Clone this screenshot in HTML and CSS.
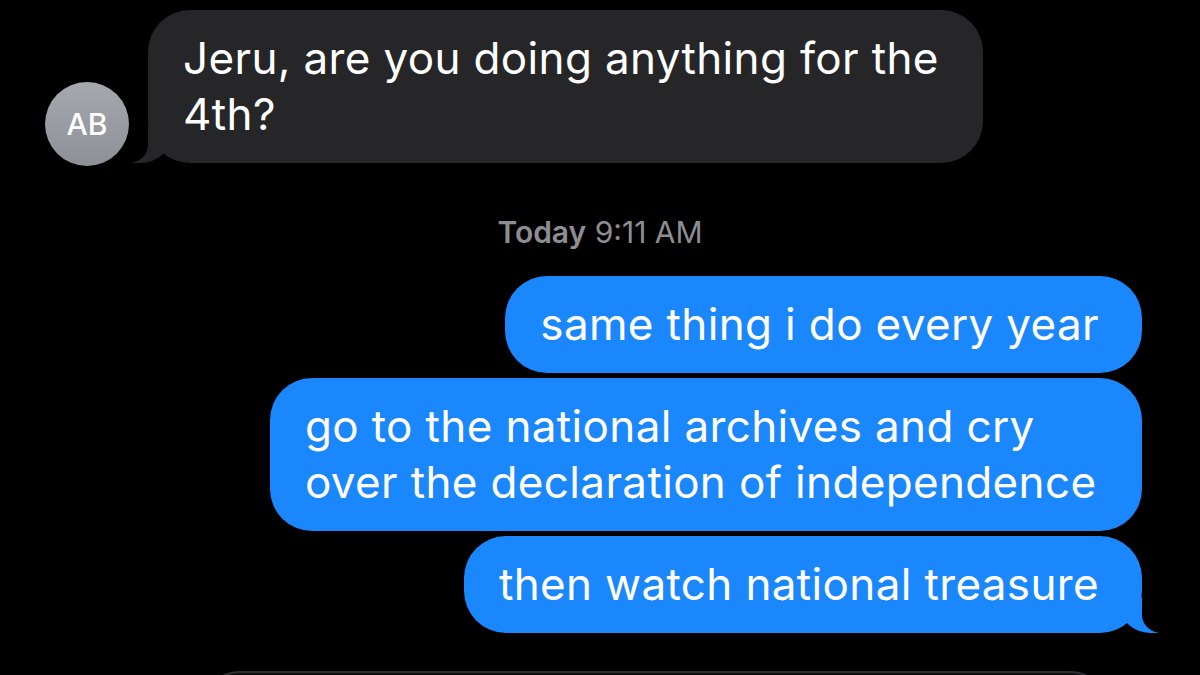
FILE: index.html
```html
<!DOCTYPE html>
<html lang="en">
<head>
  <meta charset="UTF-8" />
  <meta name="viewport" content="width=device-width, initial-scale=1.0" />
  <title>Messages</title>
  <link rel="stylesheet" href="styles.css">
</head>
<body>
  <div class="thread">
    <div class="row-in">
      <div class="avatar">AB</div>
      <div class="bubble bubble-in">Jeru, are you doing anything for the 4th?</div>
    </div>

    <p class="stamp"><b>Today</b> 9:11 AM</p>

    <div class="group-out">
      <div class="bubble bubble-out">same thing i do every year</div>
      <div class="bubble bubble-out">go to the national archives and cry over the declaration of independence</div>
      <div class="bubble bubble-out last">then watch national treasure</div>
    </div>

    <div class="composer"></div>
  </div>
</body>
</html>
```

FILE: styles.css
```css
html, body {
  overflow: hidden;
}
body {
  margin: 0;
  background: #000;
  font-family: 'Inter', 'Noto Sans', sans-serif;
  color: #fff;
  height: 675px;
}
.thread {
  display: flex;
  flex-direction: column;
  padding-top: 10px;
  height: 665px;
  overflow: hidden;
}
.row-in {
  display: flex;
  align-items: flex-end;
  gap: 19px;
  padding-left: 45px;
}
.avatar {
  position: relative;
  z-index: 1;
  width: 84px;
  height: 84px;
  border-radius: 50%;
  background: linear-gradient(to bottom, #a6a8af, #8e9097);
  display: flex;
  justify-content: center;
  align-items: center;
  font-size: 30px;
  font-weight: 500;
  margin-bottom: -3px;
  flex-shrink: 0;
}
.bubble {
  position: relative;
  font-size: 44px;
  line-height: 56px;
  letter-spacing: 0.35px;
  padding: 20px 43px 21px 35px;
  border-radius: 42px;
  max-width: 794px;
  width: fit-content;
}
.bubble-in {
  background: #262629;
  max-width: 758px;
  padding-right: 42px;
}
.bubble-in::before,
.bubble-in::after {
  content: "";
  position: absolute;
  bottom: 0;
  height: 36px;
}
.bubble-in::before {
  left: -15px;
  width: 38px;
  background: #262629;
  border-bottom-right-radius: 30px 28px;
}
.bubble-in::after {
  left: -36px;
  width: 36px;
  background: #000;
  border-bottom-right-radius: 20px 18px;
}
.stamp {
  margin: 52px 0 0;
  text-align: center;
  font-size: 30px;
  line-height: 34px;
  color: #8d8d92;
}
.stamp b {
  font-weight: 600;
}
.group-out {
  display: flex;
  flex-direction: column;
  align-items: flex-end;
  gap: 5px;
  padding-right: 58px;
  margin-top: 27px;
}
.bubble-out {
  background: #1b87fd;
}
.last::before,
.last::after {
  content: "";
  position: absolute;
  bottom: 0;
  height: 36px;
}
.last::before {
  right: -16px;
  width: 38px;
  background: #1b87fd;
  border-bottom-left-radius: 30px 28px;
}
.last::after {
  right: -36px;
  width: 36px;
  background: #000;
  border-bottom-left-radius: 20px 18px;
}
.composer {
  margin: 38px 90px 0 200px;
  height: 80px;
  flex-shrink: 0;
  border: 2px solid #2e2e30;
  border-radius: 40px;
  background: #0b0b0c;
}
```
